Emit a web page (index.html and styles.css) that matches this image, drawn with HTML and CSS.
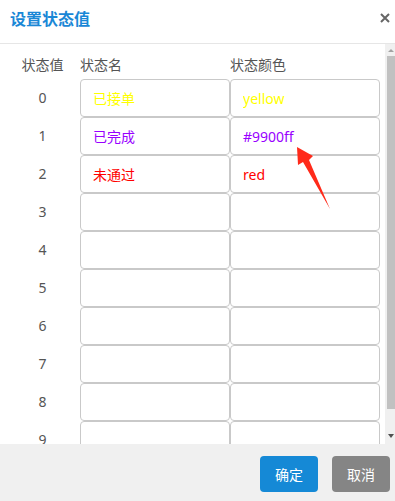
FILE: index.html
```html
<!DOCTYPE html>
<html lang="zh-CN">
<head>
    <meta charset="UTF-8">
    <meta name="viewport" content="width=device-width, initial-scale=1.0">
    <title>设置状态值</title>
    <link rel="stylesheet" href="styles.css">
</head>
<body>
    <div class="dialog">
        <div class="dialog-header">
            <span class="dialog-title">设置状态值</span>
            <a class="dialog-close" href="#close">
                <svg width="10" height="10" viewBox="0 0 10 10">
                    <path d="M1 1 L9 9 M9 1 L1 9" stroke="#666" stroke-width="2" fill="none"/>
                </svg>
            </a>
        </div>

        <div class="dialog-body">
            <div class="status-table">
                <div class="th num">状态值</div>
                <div class="th">状态名</div>
                <div class="th">状态颜色</div>

                <div class="num">0</div>
                <input class="cell c-yellow" type="text" value="已接单">
                <input class="cell c-yellow" type="text" value="yellow">

                <div class="num">1</div>
                <input class="cell c-purple" type="text" value="已完成">
                <input class="cell c-purple" type="text" value="#9900ff">

                <div class="num">2</div>
                <input class="cell c-red" type="text" value="未通过">
                <input class="cell c-red" type="text" value="red">

                <div class="num">3</div>
                <input class="cell" type="text">
                <input class="cell" type="text">

                <div class="num">4</div>
                <input class="cell" type="text">
                <input class="cell" type="text">

                <div class="num">5</div>
                <input class="cell" type="text">
                <input class="cell" type="text">

                <div class="num">6</div>
                <input class="cell" type="text">
                <input class="cell" type="text">

                <div class="num">7</div>
                <input class="cell" type="text">
                <input class="cell" type="text">

                <div class="num">8</div>
                <input class="cell" type="text">
                <input class="cell" type="text">

                <div class="num">9</div>
                <input class="cell" type="text">
                <input class="cell" type="text">
            </div>

            <div class="scrollbar">
                <div class="scroll-btn up"><span class="arrow-up"></span></div>
                <div class="scroll-thumb"></div>
                <div class="scroll-btn down"><span class="arrow-down"></span></div>
            </div>

            <svg class="pointer" width="40" height="70" viewBox="290 145 40 70">
                <polygon points="297,148 313,157 309,161 330,210 303,163 298,166" fill="#ff2a1a"/>
            </svg>
        </div>

        <div class="dialog-footer">
            <button class="btn btn-ok">确定</button>
            <button class="btn btn-cancel">取消</button>
        </div>
    </div>
</body>
</html>
```

FILE: styles.css
```css
body {
    margin: 0;
    padding: 0;
    font-family: "Noto Sans", "Noto Sans CJK SC", sans-serif;
    background-color: #ffffff;
}
.dialog {
    width: 395px;
    height: 501px;
    display: flex;
    flex-direction: column;
    overflow: hidden;
}
.dialog-header {
    height: 44px;
    box-sizing: border-box;
    border-bottom: 1px solid #e6e6e6;
    padding: 7px 5px 0 10px;
    display: flex;
    justify-content: space-between;
    align-items: flex-start;
}
.dialog-title {
    font-size: 16px;
    font-weight: bold;
    color: #1a87d6;
    line-height: 24px;
}
.dialog-close {
    display: block;
    padding-top: 6px;
    line-height: 0;
}
.dialog-body {
    height: 400px;
    display: flex;
    overflow: hidden;
    position: relative;
}
.status-table {
    flex: 1;
    display: grid;
    grid-template-columns: 70px 150px 150px;
    grid-auto-rows: 38px;
    grid-template-rows: 35px;
    padding-left: 10px;
    align-content: start;
    font-size: 14px;
    color: #555;
}
.status-table .num {
    margin-right: 5px;
    text-align: center;
    line-height: 38px;
}
.th {
    padding-top: 11px;
    line-height: 20px;
    white-space: nowrap;
}
.status-table .th.num {
    line-height: 20px;
}
.cell {
    box-sizing: border-box;
    width: 150px;
    height: 38px;
    margin: 0;
    padding: 0 12px;
    border: 1px solid #c9c9c9;
    border-radius: 4px;
    font-family: inherit;
    font-size: 14px;
    color: #333;
    background: #fff;
    outline: none;
}
.c-yellow { color: #ffff00; }
.c-purple { color: #9900ff; }
.c-red { color: #ff0000; }

.scrollbar {
    width: 10px;
    background-color: #f0f0f0;
    display: flex;
    flex-direction: column;
}
.scroll-btn {
    display: flex;
    justify-content: center;
    align-items: center;
}
.scroll-btn.up {
    height: 12px;
    padding-left: 2px;
}
.scroll-btn.down {
    height: 17px;
    margin-top: auto;
    padding-left: 2px;
}
.arrow-up {
    width: 0;
    height: 0;
    border-left: 3px solid transparent;
    border-right: 3px solid transparent;
    border-bottom: 3px solid #a3a3a3;
}
.arrow-down {
    width: 0;
    height: 0;
    border-left: 3px solid transparent;
    border-right: 3px solid transparent;
    border-top: 4px solid #505050;
}
.scroll-thumb {
    height: 353px;
    margin-left: 2px;
    background-color: #c1c1c1;
}
.pointer {
    position: absolute;
    left: 290px;
    top: 100px;
}
.dialog-footer {
    flex: 1;
    background-color: #f0f0f0;
    display: flex;
    justify-content: flex-end;
    align-items: flex-start;
    gap: 14px;
    padding: 12px 5px 0 0;
}
.btn {
    width: 58px;
    height: 36px;
    border: none;
    border-radius: 4px;
    color: white;
    font-family: inherit;
    font-size: 14px;
    cursor: pointer;
}
.btn-ok {
    background-color: #1589d6;
}
.btn-cancel {
    background-color: #858585;
}
```
